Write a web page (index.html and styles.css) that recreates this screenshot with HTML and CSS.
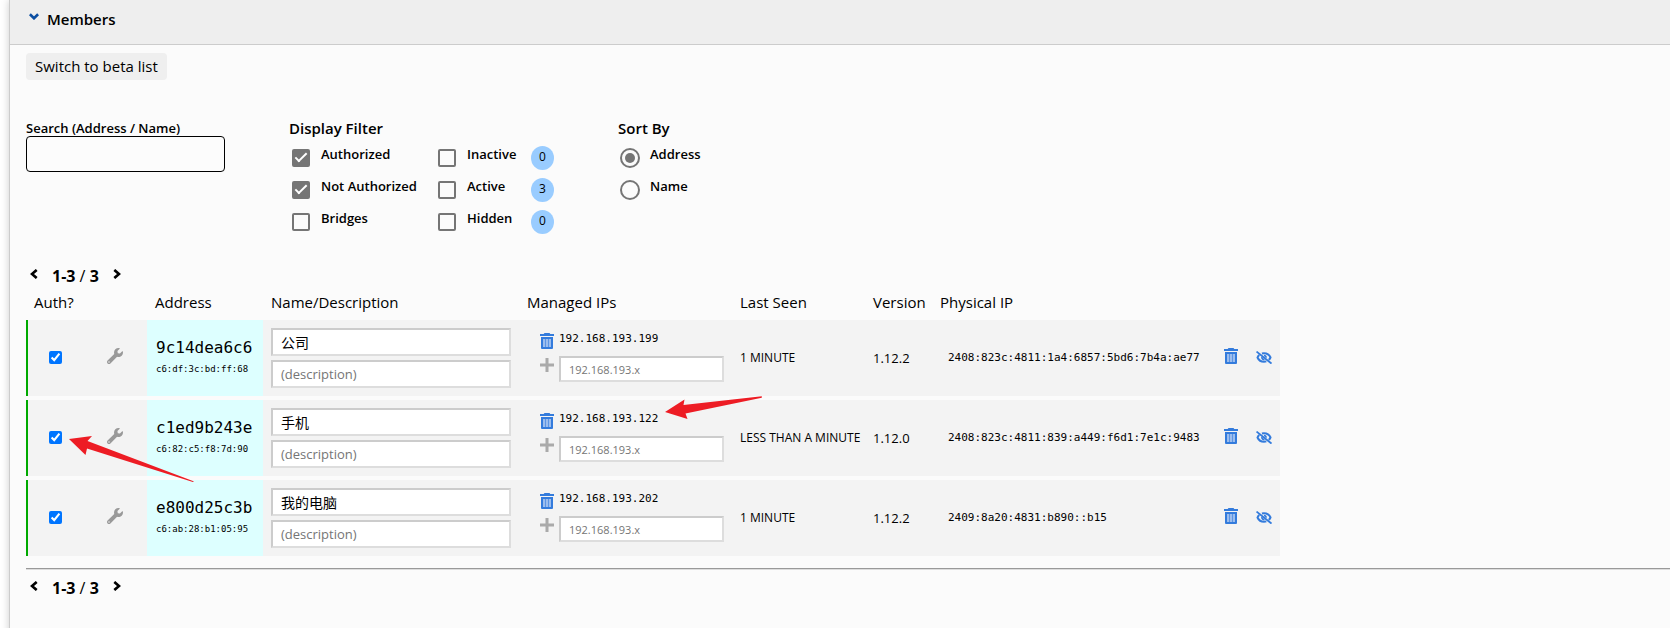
FILE: index.html
```html
<!DOCTYPE html>
<html lang="en">
<head>
<meta charset="utf-8">
<title>Members</title>
<link rel="stylesheet" href="styles.css">
</head>
<body>
<svg class="sprite" aria-hidden="true">
  <symbol id="wrench" viewBox="0 0 512 512"><path d="M507.73 109.1c-2.24-9.03-13.54-12.09-20.12-5.51l-74.36 74.36-67.88-11.31-11.31-67.88 74.36-74.36c6.62-6.62 3.43-17.9-5.66-20.16-47.38-11.74-99.55.91-136.58 37.93-39.64 39.64-50.55 97.1-34.05 147.2L18.74 402.76c-24.99 24.99-24.99 65.51 0 90.5 24.99 24.99 65.51 24.99 90.5 0l213.21-213.21c50.12 16.71 107.47 5.68 147.37-34.22 37.07-37.07 49.7-89.32 37.91-136.73zM64 472c-13.25 0-24-10.75-24-24 0-13.26 10.75-24 24-24s24 10.74 24 24c0 13.25-10.75 24-24 24z"/></symbol>
  <symbol id="trash" viewBox="0 0 14 16"><path d="M4.500 0h5l.8 1H14v2H0V1h3.700z"/><path d="M1 4h12v11a1 1 0 0 1-1 1H2a1 1 0 0 1-1-1z"/><path fill="#9bbdee" d="M3 6h2.300v8H3zM5.900 6h2.200v8H5.900zM8.700 6H11v8H8.700z"/></symbol>
  <symbol id="plus" viewBox="0 0 14 14"><path d="M5.500 0h3v5.500H14v3H8.500V14h-3V8.500H0v-3h5.500z"/></symbol>
  <symbol id="eye-off" viewBox="0 0 16 13"><path fill="none" stroke="currentColor" stroke-width="2" d="M3.300 4C2.500 4.700 1.900 5.500 1.500 6.500c1.200 2.700 3.600 4.300 6.500 4.300.8 0 1.600-.1 2.300-.4M6 2.500c.6-.2 1.300-.3 2-.3 2.900 0 5.400 1.600 6.500 4.300-.4.900-1 1.700-1.700 2.400"/><path fill="none" stroke="currentColor" stroke-width="1.600" d="M5.900 5.800c-.3 1.700 1 2.900 2.600 2.800M8 4.500c1.300 0 2.200.9 2.100 2.200"/><path fill="none" stroke="currentColor" stroke-width="1.800" d="M.5.600l15 12"/></symbol>
  <symbol id="left" viewBox="0 0 8 10"><path fill="none" stroke="currentColor" stroke-width="2.600" d="M6.700.9L2 5l4.700 4.100"/></symbol>
  <symbol id="right" viewBox="0 0 8 10"><path fill="none" stroke="currentColor" stroke-width="2.600" d="M1.300.9L6 5 1.300 9.100"/></symbol>
</svg>

<main class="panel">
  <details class="section" open>
    <summary class="section-head">
      <svg class="caret" viewBox="0 0 10 7"><path fill="none" stroke="currentColor" stroke-width="2.600" d="M.9 1.300L5 5.300l4.100-4"/></svg>
      <span>Members</span>
    </summary>

    <div class="section-body">
      <button class="beta" type="button">Switch to beta list</button>

      <form class="filters">
        <div class="search">
          <label for="search">Search (Address / Name)</label>
          <input id="search" type="text">
        </div>
        <div class="display">
          <div class="group-title">Display Filter</div>
          <div class="display-grid">
            <label class="option"><input type="checkbox" checked>Authorized</label>
            <label class="option"><input type="checkbox">Inactive</label>
            <span class="count">0</span>
            <label class="option"><input type="checkbox" checked>Not Authorized</label>
            <label class="option"><input type="checkbox">Active</label>
            <span class="count">3</span>
            <label class="option"><input type="checkbox">Bridges</label>
            <label class="option"><input type="checkbox">Hidden</label>
            <span class="count">0</span>
          </div>
        </div>
        <div class="sort">
          <div class="group-title">Sort By</div>
          <label class="option"><input type="radio" name="sort" checked>Address</label>
          <label class="option"><input type="radio" name="sort">Name</label>
        </div>
      </form>

      <nav class="pager">
        <button type="button" aria-label="Previous page"><svg><use href="#left"/></svg></button>
        <span><b>1-3</b> / <b>3</b></span>
        <button type="button" aria-label="Next page"><svg><use href="#right"/></svg></button>
      </nav>

      <table class="members">
        <colgroup>
          <col class="c-auth"><col class="c-tool"><col class="c-address"><col class="c-name"><col class="c-ips"><col class="c-seen"><col class="c-version"><col class="c-physical"><col class="c-action"><col class="c-action">
        </colgroup>
        <thead>
          <tr><th>Auth?</th><th></th><th>Address</th><th>Name/Description</th><th>Managed IPs</th><th>Last Seen</th><th>Version</th><th>Physical IP</th><th></th><th></th></tr>
        </thead>
        <tbody>
          <tr>
            <td class="auth"><input type="checkbox" checked aria-label="Authorize 9c14dea6c6"></td>
            <td class="tool"><button type="button" aria-label="Settings"><svg><use href="#wrench"/></svg></button></td>
            <td class="address"><div class="id">9c14dea6c6</div><div class="mac">c6:df:3c:bd:ff:68</div></td>
            <td class="fields"><div class="names"><input type="text" value="公司" aria-label="Name"><input type="text" placeholder="(description)" aria-label="Description"></div></td>
            <td class="fields"><div class="ips"><button class="del" type="button" aria-label="Remove IP"><svg><use href="#trash"/></svg></button><span class="ip">192.168.193.199</span><button class="add" type="button" aria-label="Add IP"><svg><use href="#plus"/></svg></button><input type="text" placeholder="192.168.193.x" aria-label="New IP"></div></td>
            <td class="seen">1 MINUTE</td>
            <td class="version">1.12.2</td>
            <td class="physical">2408:823c:4811:1a4:6857:5bd6:7b4a:ae77</td>
            <td class="action"><button class="del" type="button" aria-label="Delete member"><svg><use href="#trash"/></svg></button></td>
            <td class="action"><button class="hide" type="button" aria-label="Hide member"><svg><use href="#eye-off"/></svg></button></td>
          </tr>
          <tr>
            <td class="auth"><input type="checkbox" checked aria-label="Authorize c1ed9b243e"></td>
            <td class="tool"><button type="button" aria-label="Settings"><svg><use href="#wrench"/></svg></button></td>
            <td class="address"><div class="id">c1ed9b243e</div><div class="mac">c6:82:c5:f8:7d:90</div></td>
            <td class="fields"><div class="names"><input type="text" value="手机" aria-label="Name"><input type="text" placeholder="(description)" aria-label="Description"></div></td>
            <td class="fields"><div class="ips"><button class="del" type="button" aria-label="Remove IP"><svg><use href="#trash"/></svg></button><span class="ip">192.168.193.122</span><button class="add" type="button" aria-label="Add IP"><svg><use href="#plus"/></svg></button><input type="text" placeholder="192.168.193.x" aria-label="New IP"></div></td>
            <td class="seen">LESS THAN A MINUTE</td>
            <td class="version">1.12.0</td>
            <td class="physical">2408:823c:4811:839:a449:f6d1:7e1c:9483</td>
            <td class="action"><button class="del" type="button" aria-label="Delete member"><svg><use href="#trash"/></svg></button></td>
            <td class="action"><button class="hide" type="button" aria-label="Hide member"><svg><use href="#eye-off"/></svg></button></td>
          </tr>
          <tr>
            <td class="auth"><input type="checkbox" checked aria-label="Authorize e800d25c3b"></td>
            <td class="tool"><button type="button" aria-label="Settings"><svg><use href="#wrench"/></svg></button></td>
            <td class="address"><div class="id">e800d25c3b</div><div class="mac">c6:ab:28:b1:05:95</div></td>
            <td class="fields"><div class="names"><input type="text" value="我的电脑" aria-label="Name"><input type="text" placeholder="(description)" aria-label="Description"></div></td>
            <td class="fields"><div class="ips"><button class="del" type="button" aria-label="Remove IP"><svg><use href="#trash"/></svg></button><span class="ip">192.168.193.202</span><button class="add" type="button" aria-label="Add IP"><svg><use href="#plus"/></svg></button><input type="text" placeholder="192.168.193.x" aria-label="New IP"></div></td>
            <td class="seen">1 MINUTE</td>
            <td class="version">1.12.2</td>
            <td class="physical">2409:8a20:4831:b890::b15</td>
            <td class="action"><button class="del" type="button" aria-label="Delete member"><svg><use href="#trash"/></svg></button></td>
            <td class="action"><button class="hide" type="button" aria-label="Hide member"><svg><use href="#eye-off"/></svg></button></td>
          </tr>
        </tbody>
      </table>

      <hr>

      <nav class="pager">
        <button type="button" aria-label="Previous page"><svg><use href="#left"/></svg></button>
        <span><b>1-3</b> / <b>3</b></span>
        <button type="button" aria-label="Next page"><svg><use href="#right"/></svg></button>
      </nav>
    </div>
  </details>
</main>

<svg class="arrow arrow-auth" viewBox="0 0 125 47" aria-hidden="true"><path d="M0 4L23 1l-4.500 5L124.500 46.300v.9L18 13.500 16.500 20z"/></svg>
<svg class="arrow arrow-ip" viewBox="0 0 97 24" aria-hidden="true"><path d="M0 16L19.500 3.500l-1 5.500L96.800.3v1.500L20.500 17.500l2 5.500z"/></svg>
</body>
</html>
```

FILE: styles.css
```css
* { box-sizing: border-box; }

body {
  margin: 0;
  background: #fff;
  color: #000;
  font: 15px/20px "Open Sans", "Noto Sans", "Noto Sans CJK SC", sans-serif;
}

button {
  padding: 0;
  border: 0;
  background: none;
  color: inherit;
  font: inherit;
}

button svg { display: block; fill: currentColor; }

.sprite { display: none; }

.panel {
  min-height: 100vh;
  margin-left: 9px;
  border-left: 1px solid #ccc;
  background: #fbfbfb;
  box-shadow: 0 0 8px rgba(0, 0, 0, 0.2);
}

.section-head {
  display: flex;
  align-items: flex-start;
  gap: 8px;
  height: 45px;
  padding: 9px 19px;
  border-bottom: 1px solid #ccc;
  background: #eee;
  font-weight: 600;
  list-style: none;
}

.caret { width: 10px; height: 7px; margin-top: 4px; color: #0b4ea2; }

.section-body { padding: 8px 0 32px 16px; }

.beta {
  padding: 3px 9px 4px;
  border-radius: 4px;
  background: #efefef;
}

.filters {
  display: flex;
  align-items: flex-start;
  margin-top: 38px;
}

.search { display: flex; flex-direction: column; width: 263px; padding-top: 2px; }
.search label { font-size: 13px; line-height: 16px; font-weight: 600; }
.search input {
  width: 199px;
  height: 36px;
  padding: 0 8px;
  border: 1px solid #000;
  border-radius: 4px;
  background: #fcfcfc;
}

.display { width: 329px; }
.group-title { height: 28px; font-weight: 600; }

.display-grid {
  display: grid;
  grid-template-columns: 146px 96px 24px;
}

.option {
  display: flex;
  gap: 11px;
  height: 32px;
  padding-left: 3px;
  font-size: 13px;
  line-height: 16px;
  font-weight: 600;
}

.option input {
  flex: none;
  appearance: none;
  display: grid;
  place-items: center;
  place-content: center;
  width: 18px;
  height: 18px;
  margin: 3px 0 0;
  border: 2px solid #757575;
  border-radius: 2px;
}
.option input[type="checkbox"]:checked { background: #757575; }
.option input[type="checkbox"]:checked::after {
  content: "";
  width: 4px;
  height: 10px;
  margin-bottom: 5px;
  border: solid #fff;
  border-width: 0 2px 2px 0;
  transform: rotate(45deg);
}
.option input[type="radio"] { width: 20px; height: 20px; margin-top: 2px; border-radius: 50%; }
.option input[type="radio"]:checked::after {
  content: "";
  width: 10px;
  height: 10px;
  border-radius: 50%;
  background: #757575;
}
.sort .option { padding-left: 2px; gap: 10px; }

.count {
  width: 23px;
  height: 24px;
  border-radius: 50%;
  background: #99ccff;
  font-size: 12px;
  line-height: 22px;
  text-align: center;
}

.pager { display: flex; gap: 14px; height: 26px; padding-left: 4px; font-size: 16px; }
.pager button { height: 10px; margin-top: 3px; }
.pager svg { width: 8px; height: 10px; }
.filters + .pager { margin-top: 24px; }

.members {
  width: 1254px;
  border-collapse: separate;
  border-spacing: 0;
  table-layout: fixed;
}
.c-auth { width: 66px; }
.c-tool { width: 55px; }
.c-address { width: 116px; }
.c-name { width: 256px; }
.c-ips { width: 213px; }
.c-seen { width: 133px; }
.c-version { width: 67px; }
.c-physical { width: 284px; }
.c-action { width: 32px; }

.members th {
  height: 28px;
  padding: 0 8px 8px;
  font-weight: 400;
  text-align: left;
  white-space: nowrap;
}
.members td {
  height: 80px;
  padding: 0 8px;
  border-bottom: 4px solid #fbfbfb;
  background: #f3f3f3;
}

.members .auth {
  padding: 0 8px 2px 23px;
  background: linear-gradient(to right, #0a0 2px, #f3f3f3 2px);
}
.auth input { display: block; width: 13px; height: 13px; margin: 0; }
.members .tool { padding-left: 15px; }
.tool svg { width: 16px; height: 16px; color: #999; }

.members .address { background: #dff; padding: 0 9px; }
.id { font: 16px/22px "DejaVu Sans Mono", monospace; }
.mac { font: 9px/20px "DejaVu Sans Mono", monospace; }

.members .fields { padding-bottom: 1px; }
.names { display: grid; gap: 4px; }
.names input, .ips input {
  width: 100%;
  border: 2px solid;
  border-color: #ccc #ddd #ddd #ccc;
  padding: 0 8px;
  background: #fff;
  font: 13px/18px "Open Sans", "Noto Sans CJK SC", sans-serif;
}
.names input { height: 28px; font-size: 14px; }
.names input::placeholder { font-size: 13px; }
.ips input { height: 26px; font-size: 11px; }
input::placeholder { color: #757575; }

.ips {
  display: grid;
  grid-template-columns: 14px 1fr;
  column-gap: 5px;
  row-gap: 7px;
  padding: 0 0 2px 13px;
}
.ip { font: 11px/16px "DejaVu Sans Mono", monospace; }
.ips .del { padding-top: 2px; }
.ips .add { align-self: start; padding-top: 2px; }
.del { color: #337bdc; }
.add { color: #aaa; }
.hide { color: #337bdc; }
.del svg { width: 14px; height: 16px; }
.add svg { width: 14px; height: 14px; }
.hide svg { width: 16px; height: 13px; }

.seen { font-size: 12px; white-space: nowrap; }
.version { font-size: 13px; }
.members .physical { padding-left: 16px; font: 11px/18px "DejaVu Sans Mono", monospace; white-space: nowrap; }

hr {
  margin: 8px 0;
  border: 0;
  border-top: 1px solid #999;
  border-bottom: 1px solid #ddd;
}

.arrow { position: absolute; fill: #ed1c24; }
.arrow-auth { left: 69px; top: 435px; width: 125px; height: 47px; }
.arrow-ip { left: 665px; top: 396px; width: 97px; height: 24px; }
```
